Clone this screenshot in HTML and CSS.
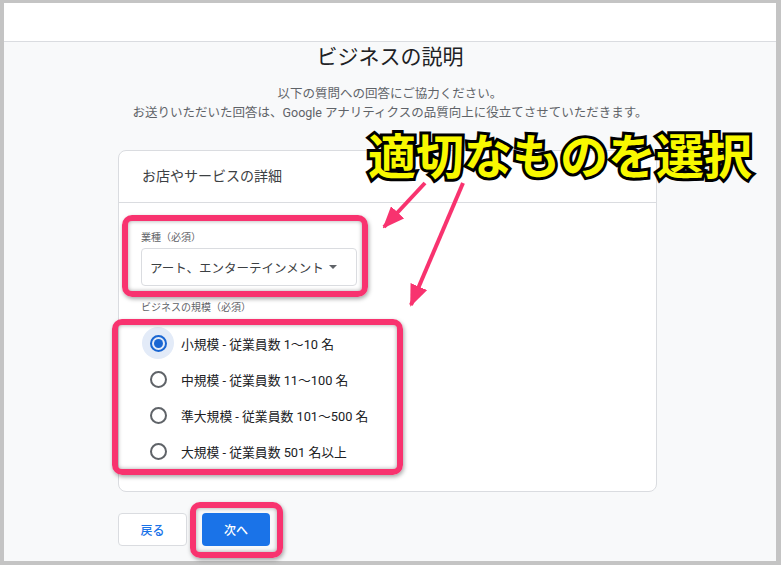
FILE: index.html
```html
<!DOCTYPE html>
<html lang="ja">
<head>
<meta charset="utf-8">
<title>ビジネスの説明</title>
<link rel="stylesheet" href="styles.css">
</head>
<body>
<div class="frame">
  <div class="window">
    <div class="topbar"></div>
    <div class="main">
      <h1 class="title">ビジネスの説明</h1>
      <p class="desc">以下の質問への回答にご協力ください。<br>お送りいただいた回答は、Google アナリティクスの品質向上に役立てさせていただきます。</p>
      <div class="card">
        <div class="card-head">お店やサービスの詳細</div>
        <div class="card-body">
          <div class="field-label">業種（必須）</div>
          <div class="select"><span>アート、エンターテインメント</span><span class="caret"></span></div>
          <div class="field-label size-label">ビジネスの規模（必須）</div>
          <div class="radio-row"><span class="radio-wrap checked"><span class="radio"></span></span><span class="radio-text">小規模 - 従業員数 1〜10 名</span></div>
          <div class="radio-row"><span class="radio-wrap"><span class="radio"></span></span><span class="radio-text">中規模 - 従業員数 11〜100 名</span></div>
          <div class="radio-row"><span class="radio-wrap"><span class="radio"></span></span><span class="radio-text">準大規模 - 従業員数 101〜500 名</span></div>
          <div class="radio-row"><span class="radio-wrap"><span class="radio"></span></span><span class="radio-text">大規模 - 従業員数 501 名以上</span></div>
        </div>
      </div>
      <div class="buttons">
        <button class="btn btn-back">戻る</button>
        <button class="btn btn-next">次へ</button>
      </div>
    </div>
  </div>
</div>

<div class="hl hl-industry"></div>
<div class="hl hl-size"></div>
<div class="hl hl-next"></div>
<div class="annot">適切なものを選択</div>
<svg class="arrows" width="781" height="565" viewBox="0 0 781 565">
  <defs>
    <marker id="ah" markerUnits="userSpaceOnUse" markerWidth="22" markerHeight="18" refX="20" refY="9" orient="auto">
      <path d="M0,0 L22,9 L0,18 z" fill="#f8336f"/>
    </marker>
  </defs>
  <line x1="425" y1="183" x2="384" y2="227" stroke="#f8336f" stroke-width="4" marker-end="url(#ah)"/>
  <line x1="463" y1="183" x2="411" y2="305" stroke="#f8336f" stroke-width="4" marker-end="url(#ah)"/>
</svg>
</body>
</html>
```

FILE: styles.css
```css
* { box-sizing: border-box; }
html, body { margin: 0; padding: 0; }
body {
  width: 781px;
  height: 565px;
  background: #c4c4c4;
  font-family: Roboto, "Noto Sans CJK JP", sans-serif;
  color: #202124;
  position: relative;
  overflow: hidden;
}
.frame {
  height: 565px;
  padding: 3px 5px 4px 4px;
}
.window {
  height: 558px;
  background: #f8f9fa;
  overflow: hidden;
}
.topbar {
  height: 39px;
  background: #fff;
  border-bottom: 1px solid #dadce0;
}
.main {
  display: flex;
  flex-direction: column;
  padding-top: 2px;
}
.title {
  margin: 0;
  font-size: 21px;
  line-height: 26px;
  font-weight: 400;
  text-align: center;
  color: #202124;
}
.desc {
  margin: 14px 0 0;
  font-size: 12.5px;
  line-height: 19px;
  text-align: center;
  color: #5f6368;
}
.card {
  margin: 28px 0 0 114px;
  width: 539px;
  height: 342px;
  background: #fff;
  border: 1px solid #dadce0;
  border-radius: 8px;
}
.card-head {
  height: 52px;
  line-height: 51px;
  padding-left: 23px;
  font-size: 14px;
  color: #3c4043;
  border-bottom: 1px solid #dadce0;
}
.card-body {
  padding: 28px 0 0 22px;
}
.field-label {
  font-size: 10px;
  line-height: 14px;
  color: #5f6368;
}
.select {
  margin-top: 3px;
  width: 216px;
  height: 38px;
  border: 1px solid #dadce0;
  border-radius: 4px;
  display: flex;
  align-items: center;
  padding-left: 8px;
  font-size: 12.5px;
  color: #3c4043;
}
.caret {
  margin-left: 5px;
  width: 0;
  height: 0;
  border-left: 4px solid transparent;
  border-right: 4px solid transparent;
  border-top: 4px solid #5f6368;
}
.size-label {
  margin-top: 15px;
}
.radio-row {
  display: flex;
  align-items: center;
  height: 36px;
}
.size-label + .radio-row { margin-top: 10px; }
.radio-wrap {
  width: 32px;
  height: 32px;
  margin-left: 1px;
  border-radius: 50%;
  display: flex;
  align-items: center;
  justify-content: center;
}
.radio {
  width: 17px;
  height: 17px;
  border: 2px solid #5f6368;
  border-radius: 50%;
  display: flex;
  align-items: center;
  justify-content: center;
}
.checked { background: #e3ebf8; }
.checked .radio { border-color: #1a66d2; }
.checked .radio::after {
  content: "";
  width: 9px;
  height: 9px;
  border-radius: 50%;
  background: #1a66d2;
}
.radio-text {
  margin-left: 7px;
  font-size: 12.8px;
  color: #202124;
}
.buttons {
  margin: 21px 0 0 114px;
  display: flex;
  gap: 15px;
}
.btn {
  height: 33px;
  border-radius: 4px;
  font-family: Roboto, "Noto Sans CJK JP", sans-serif;
  font-size: 12px;
  font-weight: 500;
  padding: 0;
}
.btn-back {
  width: 69px;
  background: #fff;
  border: 1px solid #dadce0;
  color: #1a73e8;
}
.btn-next {
  width: 68px;
  background: #1a73e8;
  border: none;
  color: #fff;
}
.hl {
  position: absolute;
  border: 6px solid #f8336f;
  border-radius: 10px;
  box-shadow: 1px 2px 4px rgba(0,0,0,0.35), inset 0 0 4px rgba(0,0,0,0.35);
}
.hl-industry { left: 122px; top: 215px; width: 246px; height: 82px; }
.hl-size { left: 112px; top: 319px; width: 291px; height: 156px; }
.hl-next { left: 190px; top: 502px; width: 93px; height: 56px; }
.annot {
  position: absolute;
  left: 368px;
  top: 123px;
  font-family: "Noto Sans CJK JP", sans-serif;
  font-weight: 700;
  font-size: 48px;
  line-height: 60px;
  color: #f8f800;
  -webkit-text-stroke: 6px #000;
  paint-order: stroke fill;
  white-space: nowrap;
}
.arrows {
  position: absolute;
  left: 0;
  top: 0;
  pointer-events: none;
}
```
